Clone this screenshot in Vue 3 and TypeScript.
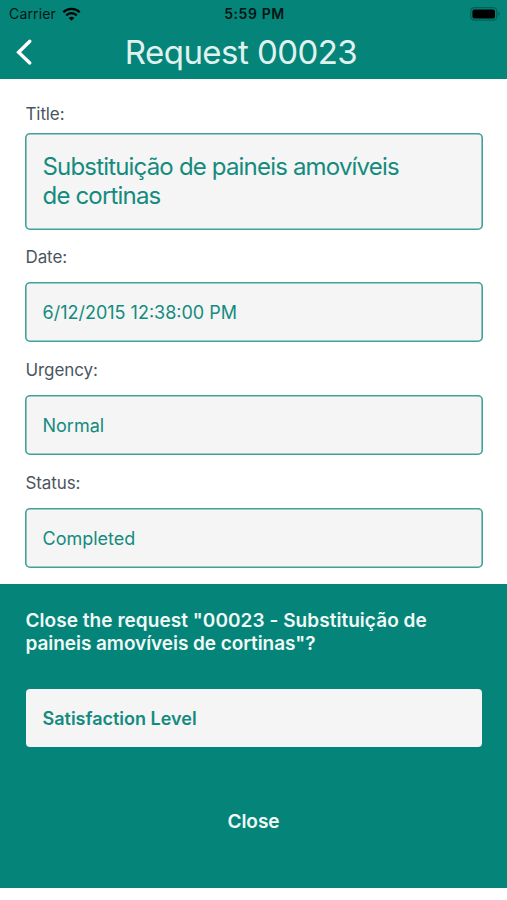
<script setup lang="ts">
interface Field {
  label: string
  value: string
  large?: boolean
}

const fields: Field[] = [
  { label: 'Title:', value: 'Substituição de paineis amovíveis de cortinas', large: true },
  { label: 'Date:', value: '6/12/2015 12:38:00 PM' },
  { label: 'Urgency:', value: 'Normal' },
  { label: 'Status:', value: 'Completed' },
]
</script>

<template>
  <div class="screen">
    <header class="top">
      <div class="status">
        <div class="carrier">
          <span class="carrier-name">Carrier</span>
          <svg class="wifi" width="19" height="14" viewBox="0 0 19 14">
            <path d="M1.300 5.200a11.700 11.700 0 0 1 16.400 0M4.200 8.400a7.500 7.500 0 0 1 10.600 0" fill="none" stroke="#000" stroke-width="2.300" />
            <path d="M9.500 13.700 6.700 11a4 4 0 0 1 5.600 0Z" fill="#000" />
          </svg>
        </div>
        <span class="time">5:59 PM</span>
        <svg class="battery" width="31" height="14" viewBox="0 0 31 14">
          <rect x="0.8" y="0.7" width="26" height="12.400" rx="3.700" fill="none" stroke="#045f56" stroke-width="1.200" />
          <rect x="2.400" y="2.400" width="22.600" height="9" rx="2" fill="#000" />
          <path d="M28.400 4.800c1.800.7 1.800 3.500 0 4.200Z" fill="#045f56" />
        </svg>
      </div>
      <div class="nav">
        <svg class="back" width="18" height="28" viewBox="0 0 18 28">
          <path d="M14.800 3.300 3.600 14.200l11.200 10.700" fill="none" stroke="#fff" stroke-width="3.400" stroke-linecap="round" />
        </svg>
        <h1>Request 00023</h1>
      </div>
    </header>
    <main class="fields">
      <section v-for="field in fields" :key="field.label" class="field" :class="{ large: field.large }">
        <div class="label">{{ field.label }}</div>
        <div class="box">
          <span>{{ field.value }}</span>
        </div>
      </section>
    </main>
    <section class="closing">
      <p class="question">Close the request "00023 - Substituição de <span class="second">paineis amovíveis de cortinas"?</span></p>
      <div class="select">Satisfaction Level</div>
      <button class="close" type="button">Close</button>
    </section>
  </div>
</template>

<style>
body {
  background: #fff;
}
</style>

<style scoped>
.screen {
  width: 507px;
  height: 900px;
  overflow: hidden;
  background: #fff;
  font-family: Inter, "Liberation Sans", sans-serif;
}
.top {
  height: 79px;
  background: #058579;
}
.status {
  display: grid;
  grid-template-columns: 1fr auto 1fr;
  align-items: center;
  height: 27px;
  padding: 0 6px 0 9px;
  color: #021512;
  font-size: 14px;
}
.carrier {
  display: flex;
  align-items: center;
  gap: 6px;
}
.carrier-name {
  letter-spacing: 0.15px;
}
.time {
  margin-right: 1px;
  letter-spacing: 0.6px;
  font-weight: 600;
}
.battery {
  justify-self: end;
}
.nav {
  display: grid;
  grid-template-columns: 34px 1fr 59px;
  align-items: center;
  height: 50px;
}
.back {
  margin-left: 15px;
}
h1 {
  margin: 0;
  text-align: center;
  color: #e0f2ef;
  font-size: 33px;
  font-weight: 400;
  line-height: 50px;
  letter-spacing: -0.55px;
}
.fields {
  height: 505px;
  padding: 22px 24.500px 0 25px;
  box-sizing: border-box;
}
.label {
  height: 38px;
  padding-left: 0.5px;
  line-height: 27px;
  color: #4b5560;
  font-size: 17px;
  letter-spacing: -0.1px;
}
.box {
  display: flex;
  align-items: center;
  box-sizing: border-box;
  height: 60px;
  margin-bottom: 15px;
  padding: 0 60px 0 17.500px;
  border-radius: 5px;
  background: #f5f5f5;
  box-shadow: inset 0 0 0 1.600px #43a197;
  color: #148b7f;
  font-size: 18px;
}
.large .label {
  height: 32px;
}
.large .box {
  height: 96.500px;
  margin-bottom: 14.500px;
  padding-bottom: 1px;
  font-size: 24px;
  line-height: 29px;
  letter-spacing: -0.82px;
}
.closing {
  height: 304px;
  padding: 25px 25.500px 0;
  box-sizing: border-box;
  background: #058579;
}
.question {
  margin: 0;
  color: #f0f9f7;
  font-size: 19px;
  font-weight: 600;
  line-height: 23px;
  letter-spacing: 0.05px;
}
.second {
  letter-spacing: -0.06px;
}
.select {
  display: flex;
  align-items: center;
  box-sizing: border-box;
  height: 58px;
  margin: 34px 0 0;
  padding: 0 0 0 17px;
  border-radius: 4px;
  background: #f5f5f5;
  color: #148b7f;
  font-size: 18px;
  font-weight: 600;
}
.close {
  display: block;
  margin: 62px auto 0;
  padding: 0;
  border: 0;
  background: none;
  color: #f0f9f7;
  font: 600 19px/25px Inter, sans-serif;
}
</style>
